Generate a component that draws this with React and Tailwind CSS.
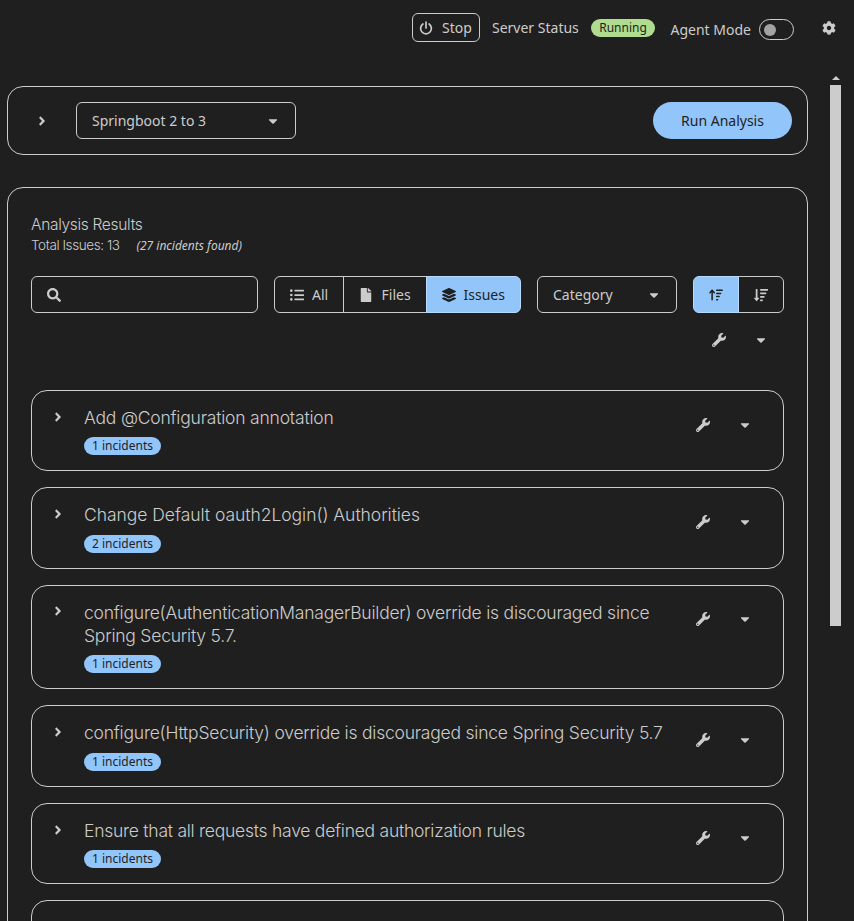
import {
  FaAngleRight,
  FaCaretDown,
  FaCog,
  FaFile,
  FaLayerGroup,
  FaListUl,
  FaSearch,
  FaSortAmountDown,
  FaWrench,
} from "react-icons/fa";
import { FaArrowUpWideShort } from "react-icons/fa6";

const issues = [
  { lines: [{ text: "Add @Configuration annotation", cls: "tracking-[-0.2px]" }], count: 1, size: "h-[81px]", badge: "mt-2", icons: "" },
  { lines: [{ text: "Change Default oauth2Login() Authorities", cls: "tracking-[-0.04px]" }], count: 2, size: "h-[82px]", badge: "mt-[9px]", icons: "" },
  {
    lines: [
      { text: "configure(AuthenticationManagerBuilder) override is discouraged since", cls: "tracking-[-0.22px]" },
      { text: "Spring Security 5.7.", cls: "tracking-[-0.22px]" },
    ],
    count: 1,
    size: "h-[104px]",
    badge: "mt-2",
    icons: "-translate-y-px",
  },
  { lines: [{ text: "configure(HttpSecurity) override is discouraged since Spring Security 5.7", cls: "tracking-[-0.22px]" }], count: 1, size: "h-[82px]", badge: "mt-[9px]", icons: "" },
  { lines: [{ text: "Ensure that all requests have defined authorization rules", cls: "tracking-[-0.25px]" }], count: 1, size: "h-[81px]", badge: "mt-2", icons: "" },
];

function PowerIcon() {
  return (
    <svg viewBox="0 0 14 14" className="h-[14px] w-[14px]" fill="none" stroke="currentColor" strokeWidth="1.7" strokeLinecap="round">
      <path d="M3.9 3A5.4 5.4 0 1 0 10.1 3" />
      <path d="M7 1v6" />
    </svg>
  );
}

function FixActions() {
  return (
    <div className="flex items-center">
      <FaWrench className="h-[14px] w-[14px]" />
      <FaCaretDown className="ml-[28px] h-[14px] w-[14px]" />
    </div>
  );
}

function IssueCard({ issue }) {
  return (
    <article className={"flex shrink-0 rounded-2xl border border-[#cccccc] " + issue.size}>
      <FaAngleRight className={"mt-[19px] ml-[19px] h-[14px] w-[14px] " + issue.icons} />
      <div className="ml-[19px] flex-1 pt-[15px]">
        <h3 className="font-['Inter','Noto_Sans',sans-serif] text-[17.5px] font-light leading-[23px]">
          {issue.lines.map((l) => (
            <div key={l.text} className="whitespace-nowrap">
              <span className={l.cls}>{l.text}</span>
            </div>
          ))}
        </h3>
        <span
          className={
            "flex h-[18px] w-[77px] items-center justify-center rounded-full bg-[#92c5f9] text-xs leading-[18px] whitespace-nowrap text-[#1f1f1f] " +
            issue.badge
          }
        >
          {issue.count} incidents
        </span>
      </div>
      <div className={"mt-[27px] mr-[31px] " + issue.icons}>
        <FixActions />
      </div>
    </article>
  );
}

export default function App() {
  return (
    <div className="flex h-[921px] w-[854px] flex-col overflow-hidden bg-[#1f1f1f] font-['Noto_Sans',sans-serif] text-sm text-[#cccccc]">
      <header className="flex h-[76px] shrink-0 items-start pl-[412px]">
        <button className="mt-[13px] flex h-[29px] w-[68px] items-center gap-[9px] rounded-md border border-[#cccccc] pl-[6px]">
          <PowerIcon />
          Stop
        </button>
        <span className="mt-[18px] ml-3 w-[87px] leading-5 whitespace-nowrap">Server Status</span>
        <span className="mt-[19px] ml-3 flex h-[18px] w-[64px] items-center justify-center rounded-full bg-[#afdc8f] text-xs text-[#1f1f1f]">
          Running
        </span>
        <span className="mt-[20px] ml-[15.5px] w-[80.5px] leading-5 whitespace-nowrap">Agent Mode</span>
        <span className="mt-[19px] ml-2 flex h-[21px] w-[35px] items-center rounded-full border border-[#cccccc] pl-[4px]">
          <span className="h-3 w-3 rounded-full bg-[#a3a3a3]" />
        </span>
        <FaCog className="mt-[21px] ml-[28px] h-[14px] w-[14px]" />
      </header>

      <div className="flex min-h-0 flex-1">
        <main className="flex w-[808px] shrink-0 flex-col pt-[10px] pl-[7px]">
          <section className="flex h-[69px] shrink-0 items-center rounded-2xl border border-[#cccccc] pr-[15px]">
            <FaAngleRight className="ml-[27px] h-[14px] w-[14px]" />
            <button className="ml-[27px] flex h-[37px] w-[220px] items-center justify-between rounded-md border border-[#cccccc] pr-[15px] pl-[15px]">
              Springboot 2 to 3
              <FaCaretDown className="h-[14px] w-[14px]" />
            </button>
            <button className="ml-auto h-[37px] w-[139px] rounded-full bg-[#92c5f9] text-[#1f1f1f]">Run Analysis</button>
          </section>

          <section className="mt-8 flex h-[900px] shrink-0 flex-col rounded-2xl border border-[#cccccc] px-[23px] pt-[26px]">
            <div className="h-[21px] font-['Inter','Noto_Sans',sans-serif] text-[15.5px] leading-[21px] font-light">
              <span className="tracking-[-0.31px]">Analysis Results</span>
            </div>
            <div className="flex h-[21px] items-center">
              <span className="w-[89px] font-['Inter','Noto_Sans',sans-serif] text-[13.5px] font-light tracking-[-0.42px] whitespace-nowrap">
                Total Issues: 13
              </span>
              <span className="ml-[16.5px] text-xs italic">(27 incidents found)</span>
            </div>

            <div className="mt-5 flex h-[37px] shrink-0 gap-4">
              <label className="flex w-[227px] items-center rounded-md border border-[#cccccc] pl-[15px]">
                <FaSearch className="h-[14px] w-[14px]" />
              </label>
              <div className="flex w-[247px]">
                <button className="flex w-[70px] items-center rounded-l-md border border-[#cccccc] pl-[15px]">
                  <FaListUl className="h-[14px] w-[14px]" />
                  <span className="ml-2">All</span>
                </button>
                <button className="-ml-px flex w-[84px] items-center border border-[#cccccc] pl-[15px]">
                  <FaFile className="h-[14px] w-[14px]" />
                  <span className="ml-[8.5px]">Files</span>
                </button>
                <button className="-ml-px flex w-[95px] items-center rounded-r-md border border-[#b9dafc] bg-[#92c5f9] pl-[15px] text-[#1f1f1f]">
                  <FaLayerGroup className="h-[14px] w-[14px]" />
                  <span className="ml-[7.5px]">Issues</span>
                </button>
              </div>
              <button className="flex w-[140px] items-center justify-between rounded-md border border-[#cccccc] px-[15px]">
                Category
                <FaCaretDown className="h-[14px] w-[14px]" />
              </button>
              <div className="flex w-[91px]">
                <button className="z-10 flex w-[46px] items-center justify-center rounded-l-md border border-[#b9dafc] bg-[#92c5f9] text-[#1f1f1f]">
                  <FaArrowUpWideShort className="h-[14px] w-[14px]" />
                </button>
                <button className="-ml-px flex w-[46px] items-center justify-center rounded-r-md border border-[#cccccc]">
                  <FaSortAmountDown className="h-[14px] w-[14px]" />
                </button>
              </div>
            </div>

            <div className="mt-5 mr-[16px] flex shrink-0 justify-end">
              <FixActions />
            </div>

            <div className="mt-[43px] flex flex-col gap-4">
              {issues.map((issue) => (
                <IssueCard key={issue.lines[0].text} issue={issue} />
              ))}
              <article className="h-[82px] shrink-0 rounded-2xl border border-[#cccccc]" />
            </div>
          </section>
        </main>

        <aside className="ml-[22px] flex w-[11px] flex-col items-center">
          <svg viewBox="0 0 8 4" className="h-[4px] w-[8px]" fill="currentColor">
            <path d="M4 0 8 4H0z" />
          </svg>
          <div className="mt-[5px] h-[541px] w-[11px] bg-[#cccccc]" />
        </aside>
      </div>
    </div>
  );
}
